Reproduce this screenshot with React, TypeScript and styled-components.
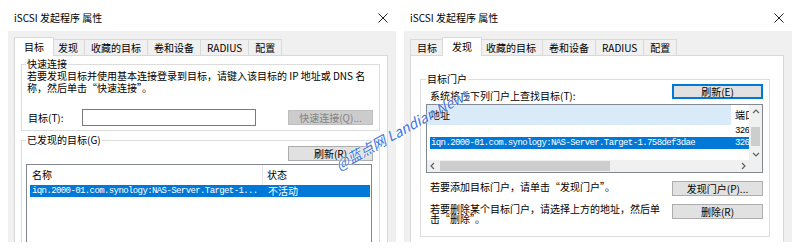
import type { ReactNode } from "react";
import styled, { createGlobalStyle, css } from "styled-components";

const GlobalStyle = createGlobalStyle`
  html, body {
    margin: 0;
    padding: 0;
    background: #fff;
  }
  body {
    font-family: "Noto Sans CJK SC", "Noto Sans", sans-serif;
    font-size: 10px;
    color: #000;
  }
`;

const Page = styled.div`
  position: relative;
  display: flex;
  width: 800px;
  height: 250px;
  overflow: hidden;
`;

const Dialog = styled.div`
  width: 396px;
  flex: 0 0 auto;
  display: flex;
  flex-direction: column;
`;

const TitleBar = styled.div`
  height: 31px;
  box-sizing: border-box;
  padding: 5px 8px 0 14px;
  display: flex;
  align-items: center;
  justify-content: space-between;
`;

const Title = styled.span`
  font-size: 10px;
  line-height: 12px;
`;

const Body = styled.div`
  margin-left: 8px;
  width: 388px;
  height: 211px;
  box-sizing: border-box;
  padding: 6px 8px 0 6px;
  background: #f0f0f0;
  overflow: hidden;
  display: flex;
  flex-direction: column;
`;

const TabStrip = styled.div`
  position: relative;
  z-index: 1;
  display: flex;
  align-items: flex-end;
  height: 18px;
`;

const Tab = styled.div<{ $active?: boolean }>`
  height: 16px;
  box-sizing: border-box;
  padding: 0 6px;
  margin-left: -1px;
  border: 1px solid #d9d9d9;
  border-bottom: none;
  background: #f0f0f0;
  line-height: 15px;
  white-space: nowrap;
  &:first-child {
    margin-left: 0;
  }
  ${(p) =>
    p.$active &&
    css`
      position: relative;
      z-index: 2;
      height: 19px;
      padding: 0 9px;
      margin: 0 -2px -1px -2px;
      background: #fff;
      line-height: 17px;
      &:first-child {
        margin-left: 0;
      }
    `}
`;

const Panel = styled.div`
  flex: 0 0 auto;
  height: 200px;
  box-sizing: border-box;
  background: #fff;
  border: 1px solid #d9d9d9;
  display: flex;
  flex-direction: column;
`;

const GroupBox = styled.fieldset<{ $mt: number; $ml: number; $mr: number; $pad: string }>`
  margin: ${(p) => p.$mt}px ${(p) => p.$mr}px 0 ${(p) => p.$ml}px;
  padding: ${(p) => p.$pad};
  border: 1px solid #dcdcdc;
  min-width: 0;
`;

const Legend = styled.legend`
  padding: 0 1px;
  margin: 0;
  line-height: 12px;
`;

const Note = styled.div<{ $ml?: number; $lh?: number }>`
  margin-left: ${(p) => p.$ml ?? 0}px;
  line-height: ${(p) => p.$lh ?? 12}px;
  white-space: nowrap;
`;

const Row = styled.div<{ $mt?: number; $align?: string }>`
  display: flex;
  align-items: ${(p) => p.$align ?? "center"};
  margin-top: ${(p) => p.$mt ?? 0}px;
`;

const Spacer = styled.div`
  flex: 1;
`;

const FieldLabel = styled.label`
  width: 54px;
  margin-left: 2px;
  line-height: 17px;
`;

const TextInput = styled.input`
  width: 174px;
  height: 17px;
  box-sizing: border-box;
  margin: 0;
  padding: 0 2px;
  border: 1px solid #7a7a7a;
  background: #fff;
  outline: none;
`;

const Button = styled.button<{ $w: number; $default?: boolean }>`
  width: ${(p) => p.$w}px;
  height: 15px;
  box-sizing: border-box;
  margin: 0;
  padding: 0;
  font: inherit;
  font-size: 10px;
  line-height: 13px;
  color: #000;
  background: #e1e1e1;
  border: 1px solid #adadad;
  &:disabled {
    color: #838383;
    background: #cccccc;
    border-color: #bfbfbf;
  }
  ${(p) =>
    p.$default &&
    css`
      border: 2px solid #0078d7;
      line-height: 11px;
    `}
`;

const ListBox = styled.div<{ $h: number; $mt: number; $mr?: number }>`
  height: ${(p) => p.$h}px;
  margin: ${(p) => p.$mt}px ${(p) => p.$mr ?? 0}px 0 0;
  box-sizing: border-box;
  border: 1px solid #828790;
  background: #fff;
  overflow: hidden;
`;

const ScrollList = styled(ListBox)`
  display: grid;
  grid-template-columns: 1fr 13px;
  grid-template-rows: 1fr 12px;
`;

const ListContent = styled.div`
  overflow: hidden;
  min-width: 0;
`;

const HeaderRow = styled.div`
  display: flex;
  height: 20px;
  line-height: 20px;
  white-space: nowrap;
`;

const HeaderCell = styled.div<{ $w?: number; $pl: number; $hover?: boolean; $divider?: boolean }>`
  ${(p) => (p.$w ? `width: ${p.$w}px; flex: 0 0 auto;` : "flex: 1; min-width: 0;")}
  box-sizing: border-box;
  padding-left: ${(p) => p.$pl}px;
  overflow: hidden;
  background: ${(p) => (p.$hover ? "#d9ebf9" : "transparent")};
  border-right: ${(p) => (p.$divider ? "1px solid #e5e5e5" : "none")};
`;

const ItemRow = styled.div<{ $selected?: boolean; $mr?: number }>`
  display: flex;
  height: 12px;
  margin: 0 ${(p) => p.$mr ?? 0}px 0 3px;
  line-height: 12px;
  white-space: nowrap;
  overflow: hidden;
  color: ${(p) => (p.$selected ? "#fff" : "#000")};
  background: ${(p) => (p.$selected ? "#0078d7" : "transparent")};
`;

const ItemCell = styled.div<{ $w?: number; $pl: number; $mono?: boolean }>`
  ${(p) => (p.$w ? `width: ${p.$w}px; flex: 0 0 auto;` : "flex: 1; min-width: 0;")}
  box-sizing: border-box;
  padding-left: ${(p) => p.$pl}px;
  overflow: hidden;
  ${(p) =>
    p.$mono &&
    css`
      font-family: "Liberation Mono", monospace;
      font-size: 9px;
      letter-spacing: -0.6px;
    `}
`;

const VScroll = styled.div`
  display: flex;
  flex-direction: column;
  background: #f0f0f0;
`;

const HScroll = styled.div`
  display: flex;
  align-items: center;
  background: #f0f0f0;
`;

const ScrollCorner = styled.div`
  background: #f0f0f0;
`;

const ArrowBox = styled.div<{ $w: number; $h: number }>`
  width: ${(p) => p.$w}px;
  height: ${(p) => p.$h}px;
  flex: 0 0 auto;
  display: flex;
  align-items: center;
  justify-content: center;
`;

const VTrack = styled.div`
  flex: 1;
  display: flex;
  justify-content: center;
`;

const VThumb = styled.div`
  width: 9px;
  height: 19px;
  margin-top: 9px;
  background: #cdcdcd;
`;

const HThumb = styled.div`
  width: 170px;
  height: 10px;
  margin-left: 1px;
  background: #cdcdcd;
`;

const Watermark = styled.div`
  position: absolute;
  left: 402px;
  top: 129px;
  transform: translate(-50%, -50%) rotate(-29deg);
  white-space: nowrap;
  font-size: 14px;
  font-style: italic;
  color: #3a72dc;
  text-shadow: 0 0 2px #fff, 0 0 1px #fff;
  pointer-events: none;
`;

const CloseIcon = () => (
  <svg width="10" height="10" viewBox="0 0 10 10">
    <path d="M0.5 0.5l9 9M9.5 0.5l-9 9" stroke="#222" strokeWidth="1" fill="none" />
  </svg>
);

const chevrons = {
  up: "M1 5L4 2l3 3",
  down: "M1 3l3 3 3-3",
  left: "M5 1L2 4l3 3",
  right: "M3 1l3 3-3 3",
};

const Chevron = ({ dir }: { dir: keyof typeof chevrons }) => (
  <svg width="8" height="8" viewBox="0 0 8 8">
    <path d={chevrons[dir]} fill="none" stroke="#606060" strokeWidth="1.2" />
  </svg>
);

const TABS = ["目标", "发现", "收藏的目标", "卷和设备", "RADIUS", "配置"];

const IscsiDialog = ({ active, children }: { active: number; children: ReactNode }) => (
  <Dialog>
    <TitleBar>
      <Title>iSCSI 发起程序 属性</Title>
      <CloseIcon />
    </TitleBar>
    <Body>
      <TabStrip>
        {TABS.map((t, i) => (
          <Tab key={t} $active={i === active}>
            {t}
          </Tab>
        ))}
      </TabStrip>
      <Panel>{children}</Panel>
    </Body>
  </Dialog>
);

const TARGET_IQN = "iqn.2000-01.com.synology:NAS-Server.Target-1.758def3dae";

const TargetsPage = () => (
  <>
    <GroupBox $mt={2} $ml={6} $mr={7} $pad="0 6px 4px 4px">
      <Legend>快速连接</Legend>
      <Note $ml={1}>
        若要发现目标并使用基本连接登录到目标，请键入该目标的 IP 地址或 DNS 名
        <br />
        称，然后单击“快速连接”。
      </Note>
      <Row $mt={15}>
        <FieldLabel>目标(T):</FieldLabel>
        <TextInput />
        <Spacer />
        <Button $w={85} disabled>
          快速连接(Q)...
        </Button>
      </Row>
    </GroupBox>
    <GroupBox $mt={3} $ml={6} $mr={7} $pad="0 6px 4px 4px">
      <Legend>已发现的目标(G)</Legend>
      <Row>
        <Spacer />
        <Button $w={85}>刷新(R)</Button>
      </Row>
      <ListBox $h={100} $mt={3} $mr={1}>
        <HeaderRow>
          <HeaderCell $w={236} $pl={5} $divider>
            名称
          </HeaderCell>
          <HeaderCell $pl={4}>状态</HeaderCell>
        </HeaderRow>
        <ItemRow $selected $mr={1}>
          <ItemCell $w={233} $pl={2} $mono>
            iqn.2000-01.com.synology:NAS-Server.Target-1...
          </ItemCell>
          <ItemCell $pl={5}>不活动</ItemCell>
        </ItemRow>
      </ListBox>
    </GroupBox>
  </>
);

const DiscoveryPage = () => (
  <GroupBox $mt={17} $ml={9} $mr={13} $pad="0 6px 12px 5px">
    <Legend>目标门户</Legend>
    <Row $mt={-1} $align="flex-start">
      <Note $ml={4} style={{ marginTop: 6 }}>
        系统将在下列门户上查找目标(T):
      </Note>
      <Spacer />
      <Button $w={91} $default>
        刷新(E)
      </Button>
    </Row>
    <ScrollList $h={69} $mt={2}>
      <ListContent>
        <HeaderRow>
          <HeaderCell $w={304} $pl={3} $hover>
            地址
          </HeaderCell>
          <HeaderCell $pl={4}>端口</HeaderCell>
        </HeaderRow>
        <ItemRow>
          <ItemCell $w={303} $pl={1} $mono />
          <ItemCell $pl={2} $mono>
            3260
          </ItemCell>
        </ItemRow>
        <ItemRow $selected>
          <ItemCell $w={303} $pl={1} $mono>
            {TARGET_IQN}
          </ItemCell>
          <ItemCell $pl={2} $mono>
            3260
          </ItemCell>
        </ItemRow>
      </ListContent>
      <VScroll>
        <ArrowBox $w={13} $h={13}>
          <Chevron dir="up" />
        </ArrowBox>
        <VTrack>
          <VThumb />
        </VTrack>
        <ArrowBox $w={13} $h={13}>
          <Chevron dir="down" />
        </ArrowBox>
      </VScroll>
      <HScroll>
        <ArrowBox $w={12} $h={12}>
          <Chevron dir="left" />
        </ArrowBox>
        <HThumb />
        <Spacer />
        <ArrowBox $w={12} $h={12}>
          <Chevron dir="right" />
        </ArrowBox>
      </HScroll>
      <ScrollCorner />
    </ScrollList>
    <Row $mt={8} $align="flex-start">
      <Note $ml={4}>若要添加目标门户，请单击“发现门户”。</Note>
      <Spacer />
      <Button $w={91}>发现门户(P)...</Button>
    </Row>
    <Row $mt={8} $align="flex-start">
      <Note $ml={4} $lh={10}>
        若要删除某个目标门户，请选择上方的地址，然后单
        <br />
        击“删除”。
      </Note>
      <Spacer />
      <Button $w={91}>删除(R)</Button>
    </Row>
  </GroupBox>
);

export default function App() {
  return (
    <>
      <GlobalStyle />
      <Page>
        <IscsiDialog active={0}>
          <TargetsPage />
        </IscsiDialog>
        <IscsiDialog active={1}>
          <DiscoveryPage />
        </IscsiDialog>
        <Watermark>@蓝点网 Landian News</Watermark>
      </Page>
    </>
  );
}
